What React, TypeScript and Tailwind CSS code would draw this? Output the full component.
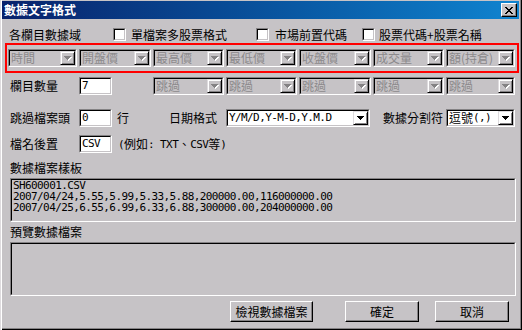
import type { ReactNode } from "react";

const CJK = "font-['Noto_Sans_CJK_TC','Noto_Sans_CJK_SC',sans-serif]";
const MONO = "font-['DejaVu_Sans_Mono',monospace] text-[11px] tracking-[-0.6px]";
const SUNKEN = "border border-t-[#848284] border-l-[#848284] border-r-white border-b-white";
const SUNKEN_IN = "border border-t-black border-l-black border-r-[#c6c3c6] border-b-[#c6c3c6]";

function Arrow({ disabled }: { disabled?: boolean }) {
  const d = "M0 0h7v1H0zM1 1h5v1H1zM2 2h3v1H2zM3 3h1v1H3z";
  return (
    <svg width="8" height="5" viewBox="0 0 8 5" shapeRendering="crispEdges">
      {disabled && <path d={d} fill="#fff" transform="translate(1 1)" />}
      <path d={d} fill={disabled ? "#848284" : "#000"} />
    </svg>
  );
}

function Combo({ children, disabled, className = "" }: { children: ReactNode; disabled?: boolean; className?: string }) {
  return (
    <div className={`flex h-[18px] ${SUNKEN} ${className}`}>
      <div className={`flex min-w-0 flex-1 ${SUNKEN_IN} ${disabled ? "bg-[#c6c3c6] text-[#8c8a8c]" : "bg-white text-black"}`}>
        <div className="flex min-w-0 flex-1 items-center whitespace-nowrap pl-[1px] text-[12px] leading-[14px]">
          {children}
        </div>
        <div className="flex w-[15px] shrink-0 items-center justify-center border border-t-[#dedbde] border-l-[#dedbde] border-r-black border-b-black shadow-[inset_1px_1px_0_#fff,inset_-1px_-1px_0_#848284]">
          <Arrow disabled={disabled} />
        </div>
      </div>
    </div>
  );
}

function Field({ value }: { value: string }) {
  return (
    <div className={`flex h-[18px] w-[33px] shrink-0 ${SUNKEN}`}>
      <div className={`flex flex-1 items-center bg-white pl-[1px] leading-[14px] ${SUNKEN_IN} ${MONO}`}>{value}</div>
    </div>
  );
}

function Check() {
  return (
    <div className={`h-[13px] w-[13px] shrink-0 ${SUNKEN}`}>
      <div className={`h-full w-full bg-white ${SUNKEN_IN}`} />
    </div>
  );
}

function Btn({ children, className = "" }: { children: ReactNode; className?: string }) {
  return (
    <div className={`flex h-[21px] items-center justify-center border border-t-white border-l-white border-r-black border-b-black shadow-[inset_-1px_-1px_0_#848284] ${className}`}>
      {children}
    </div>
  );
}

const M = ({ children }: { children: ReactNode }) => <span className={MONO}>{children}</span>;

export default function App() {
  const fields = ["時間", "開盤價", "最高價", "最低價", "收盤價", "成交量", "額(持倉)"];
  const sample = [
    "SH600001.CSV",
    "2007/04/24,5.55,5.99,5.33,5.88,200000.00,116000000.00",
    "2007/04/25,6.55,6.99,6.33,6.88,300000.00,204000000.00",
  ];

  return (
    <div className={`flex h-[330px] w-[522px] flex-col bg-[#c6c3c6] text-[12px] leading-none text-black ${CJK} shadow-[inset_1px_0_0_#dedbde,inset_2px_0_0_#fff,inset_-1px_-1px_0_#000,inset_-2px_-2px_0_#848284]`}>
      {/* title bar */}
      <div className="ml-[2px] mr-[3px] mt-[1px] flex h-[18px] items-center justify-between bg-linear-to-r from-[#08216b] to-[#1084d0] pl-[2px] pr-[2px]">
        <span className="font-bold text-white">數據文字格式</span>
        <div className="flex h-[14px] w-[16px] items-center justify-center bg-[#c6c3c6] border border-t-white border-l-white border-r-black border-b-black shadow-[inset_-1px_-1px_0_#848284]">
          <svg width="8" height="7" viewBox="0 0 8 7" shapeRendering="crispEdges">
            <path d="M0 0h2v1H0zM6 0h2v1H6zM1 1h2v1H1zM5 1h2v1H5zM2 2h4v1H2zM3 3h2v1H3zM2 4h4v1H2zM1 5h2v1H1zM5 5h2v1H5zM0 6h2v1H0zM6 6h2v1H6z" fill="#000" />
          </svg>
        </div>
      </div>

      {/* row 1 */}
      <div className="mt-[8px] flex h-[15px] items-center pl-[9px]">
        <span className="w-[104px]">各欄目數據域</span>
        <Check />
        <span className="ml-[5px]">單檔案多股票格式</span>
        <div className="ml-[29px]"><Check /></div>
        <span className="ml-[6px]">市場前置代碼</span>
        <div className="ml-[15px]"><Check /></div>
        <span className="ml-[4px]">股票代碼+股票名稱</span>
      </div>

      {/* highlighted field row */}
      <div className="ml-[5px] mt-[1px] h-[30px] w-[514px] border-2 border-[#ff0000] pl-[1px] pt-[4px]">
        <div className="grid grid-cols-[69px_72px_71px_71px_72px_71px_69px] gap-x-[2px]">
          {fields.map((f) => (
            <Combo key={f} disabled>{f}</Combo>
          ))}
        </div>
      </div>

      {/* row 2 */}
      <div className="mt-[4px] grid grid-cols-[69px_72px_71px_71px_72px_71px_69px] gap-x-[2px] pl-[8px]">
        <div className="flex items-center pl-[2px]">欄目數量</div>
        <Field value="7" />
        {[0, 1, 2, 3, 4].map((i) => (
          <Combo key={i} disabled>跳過</Combo>
        ))}
      </div>

      {/* row 3 */}
      <div className="mt-[14px] flex h-[18px] items-center pl-[10px]">
        <span className="w-[69px]">跳過檔案頭</span>
        <Field value="0" />
        <span className="ml-[5px]">行</span>
        <span className="ml-[40px]">日期格式</span>
        <Combo className="ml-[9px] w-[144px]">
          <M>Y/M/D,Y-M-D,Y.M.D</M>
        </Combo>
        <span className="ml-[13px]">數據分割符</span>
        <Combo className="ml-[3px] w-[69px]">
          逗號<M>(,)</M>
        </Combo>
      </div>

      {/* row 4 */}
      <div className="mt-[8px] flex h-[18px] items-center pl-[10px]">
        <span className="w-[69px]">檔名後置</span>
        <Field value="CSV" />
        <span className="ml-[6px] flex items-center">
          <M>(</M>例如<M>: TXT</M>、<M>CSV</M>等<M>)</M>
        </span>
      </div>

      <div className="mt-[8px] flex h-[14px] items-center pl-[10px]">數據檔案樣板</div>
      <div className={`ml-[10px] mt-[3px] flex h-[44px] w-[506px] ${SUNKEN}`}>
        <div className={`flex-1 pl-[1px] ${SUNKEN_IN}`}>
          {sample.map((l) => (
            <div key={l} className={`${MONO} h-[11px] leading-[11px]`}>{l}</div>
          ))}
        </div>
      </div>

      <div className="mt-[3px] flex h-[14px] items-center pl-[10px]">預覽數據檔案</div>
      <div className={`ml-[10px] mt-[3px] flex h-[54px] w-[506px] ${SUNKEN}`}>
        <div className={`flex-1 ${SUNKEN_IN}`} />
      </div>

      {/* buttons */}
      <div className="mt-[5px] flex">
        <Btn className="ml-[230px] w-[83px]">檢視數據檔案</Btn>
        <Btn className="ml-[32px] w-[74px]">確定</Btn>
        <Btn className="ml-[16px] w-[74px]">取消</Btn>
      </div>
    </div>
  );
}
